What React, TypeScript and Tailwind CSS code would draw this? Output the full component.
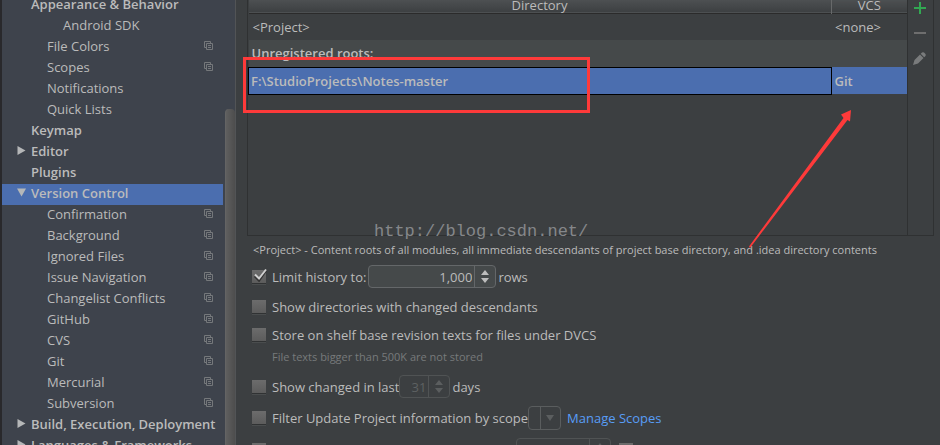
import { useState } from 'react';

type TreeItem = { label: string; level: 0 | 1 | 2; arrow?: 'open' | 'closed'; copy?: boolean };

const tree: TreeItem[] = [
  { label: 'Appearance & Behavior', level: 0 },
  { label: 'Android SDK', level: 2 },
  { label: 'File Colors', level: 1, copy: true },
  { label: 'Scopes', level: 1, copy: true },
  { label: 'Notifications', level: 1 },
  { label: 'Quick Lists', level: 1 },
  { label: 'Keymap', level: 0 },
  { label: 'Editor', level: 0, arrow: 'closed' },
  { label: 'Plugins', level: 0 },
  { label: 'Version Control', level: 0, arrow: 'open' },
  { label: 'Confirmation', level: 1, copy: true },
  { label: 'Background', level: 1, copy: true },
  { label: 'Ignored Files', level: 1, copy: true },
  { label: 'Issue Navigation', level: 1, copy: true },
  { label: 'Changelist Conflicts', level: 1, copy: true },
  { label: 'GitHub', level: 1, copy: true },
  { label: 'CVS', level: 1, copy: true },
  { label: 'Git', level: 1, copy: true },
  { label: 'Mercurial', level: 1, copy: true },
  { label: 'Subversion', level: 1, copy: true },
  { label: 'Build, Execution, Deployment', level: 0, arrow: 'closed' },
  { label: 'Languages & Frameworks', level: 0, arrow: 'closed' },
];

const indent = { 0: 'pl-[15px] font-semibold', 1: 'pl-[45px]', 2: 'pl-[61px]' };

function CopyIcon() {
  return (
    <svg className="ml-auto mr-2.5 shrink-0" width="9" height="9" viewBox="0 0 9 9" fill="none" stroke="#75787b" aria-hidden="true">
      <path d="M2 6.5H.5v-6h6V2" />
      <path d="M2.5 2.5h6v6h-6zM4 4.5h3M4 6.5h3" />
    </svg>
  );
}

function TreeArrow({ open }: { open: boolean }) {
  return (
    <svg width="9" height="9" viewBox="0 0 9 9" fill="#b5b7b8" aria-hidden="true">
      <path d={open ? 'M0 .5h9L4.500 8.500z' : 'M.5 0v9L8.500 4.500z'} />
    </svg>
  );
}

function Sidebar() {
  const [selected, setSelected] = useState('Version Control');
  return (
    <nav aria-label="Settings" className="flex w-[235px] shrink-0 overflow-hidden border-l-2 border-[#29292c] bg-[#3e434c]">
      <ul className="-mt-[5px] min-w-0 flex-1">
        {tree.map((item) => (
          <li key={item.label}>
            <button
              type="button"
              onClick={() => setSelected(item.label)}
              className={`flex h-[21px] w-full items-center whitespace-nowrap pb-1 text-left ${indent[item.level]} ${selected === item.label ? 'bg-[#4b6eaf]' : ''}`}
            >
              {item.level === 0 && (
                <span className="w-3.5 shrink-0">{item.arrow && <TreeArrow open={item.arrow === 'open'} />}</span>
              )}
              {item.label}
              {item.copy && <CopyIcon />}
            </button>
          </li>
        ))}
      </ul>
      <div className="ml-0.5 flex w-2.5 flex-col pt-[109px]">
        <div className="flex-1 rounded-t-sm border-l border-[#646464] bg-linear-to-r from-[#5f5f5f] to-[#4d4d4d]" />
      </div>
    </nav>
  );
}

function CheckBox({ id, checked = false }: { id: string; checked?: boolean }) {
  return (
    <span className="relative flex size-3.5 shrink-0">
      <input
        id={id}
        type="checkbox"
        defaultChecked={checked}
        className="peer size-3.5 appearance-none border-b border-[#303233] bg-linear-to-b from-[#6c6c6c] to-[#5c5c5c] shadow-[0_1px_0_#4a4d4e]"
      />
      <svg className="pointer-events-none absolute -top-1 left-0 hidden peer-checked:block" width="16" height="16" viewBox="0 0 16 16" fill="none" aria-hidden="true">
        <path d="M3 10l4 4 7-10" stroke="#333" strokeWidth="3" />
        <path d="M3 8.500l4 4 7-9" stroke="#d0d0d0" strokeWidth="2" />
      </svg>
    </span>
  );
}

function Spinner({ id, value, width, disabled = false }: { id: string; value: string; width: string; disabled?: boolean }) {
  const line = disabled ? 'border-[#505354]' : 'border-[#646769]';
  return (
    <span className={`flex h-[23px] rounded-sm border ${line} ${width} ${disabled ? 'text-[#5e6162]' : 'bg-[#45494a]'}`}>
      <input
        id={id}
        defaultValue={value}
        disabled={disabled}
        className={`min-w-0 flex-1 border-r bg-transparent pr-0.5 text-right outline-none ${line}`}
      />
      <button type="button" disabled={disabled} aria-label="Change value" className="flex w-5 items-center justify-center">
        <svg width="8" height="13" viewBox="0 0 8 13" fill={disabled ? '#5b5e5f' : '#bdbdbd'} aria-hidden="true">
          <path d="M0 5l4-5 4 5zM0 8h8l-4 5z" />
        </svg>
      </button>
    </span>
  );
}

function RootsTable() {
  return (
    <div className="relative flex h-[236px] border-b border-l border-[#2f3132]">
      <table className="h-[94px] min-w-0 flex-1 table-fixed border-collapse">
        <colgroup>
          <col />
          <col className="w-[76px]" />
        </colgroup>
        <thead>
          <tr className="h-[13px] border-b border-[#2b2b2b] bg-linear-to-b from-[#4d5052] to-[#3d4042] leading-[10px]">
            <th className="p-0 pb-0.5 font-normal">Directory</th>
            <th className="border-l border-[#67696a] p-0 pb-0.5 font-normal">VCS</th>
          </tr>
        </thead>
        <tbody>
          <tr className="h-[27px]">
            <td className="p-0 pl-1">&lt;Project&gt;</td>
            <td className="p-0 pl-1">&lt;none&gt;</td>
          </tr>
          <tr className="h-[27px] bg-[#45494a] font-semibold">
            <td colSpan={2} className="p-0 pl-[3px]">Unregistered roots:</td>
          </tr>
          <tr className="h-[27px] bg-[#4b6eaf] font-semibold">
            <td className="border border-black p-0 pl-0.5">F:\StudioProjects\Notes-master</td>
            <td className="p-0 pl-[3px]">Git</td>
          </tr>
        </tbody>
      </table>
      <div className="flex w-[27px] flex-col items-center border-x border-[#2f3132] pr-0.5">
        <button type="button" aria-label="Add" className="flex h-4 w-full items-center justify-center">
          <svg width="12" height="12" viewBox="0 0 12 12" stroke="#32a852" strokeWidth="2" aria-hidden="true"><path d="M6 0v12M0 6h12" /></svg>
        </button>
        <button type="button" aria-label="Remove" className="flex h-[34px] w-full items-center justify-center">
          <svg width="12" height="2" viewBox="0 0 12 2" fill="#6e6e6e" aria-hidden="true"><path d="M0 0h12v2H0z" /></svg>
        </button>
        <button type="button" aria-label="Edit" className="flex h-4 w-full items-center justify-center">
          <svg width="13" height="13" viewBox="0 0 13 13" fill="#797b7c" aria-hidden="true">
            <path d="M0 13l1.500-5L7 2.500 10.500 6 5 11.500zM7.700 1.800L9 .5Q10 0 11 .5l1.500 1.500Q13 3 12.500 4l-1.300 1.300z" />
          </svg>
        </button>
      </div>
      <svg className="pointer-events-none absolute top-[108px] right-[80px]" width="106" height="142" viewBox="0 0 106 142" fill="#fe3a3a" aria-hidden="true">
        <path d="M1 138.500L95.500 10 93 6.500 103 2l-1 11.500-2.500-1.500L2 140z" />
      </svg>
      <div className="pointer-events-none absolute top-[57px] -left-[5px] h-14 w-[347px] border-3 border-[#fe3a3a]" />
      <span className="pointer-events-none absolute top-[220px] left-[126px] font-['Liberation_Mono',monospace] text-[17px] leading-6 text-[#85878a]">
        http://blog.csdn.net/
      </span>
    </div>
  );
}

export default function App() {
  return (
    <div className="flex h-screen overflow-hidden bg-[#3c3f41] font-['Open_Sans',sans-serif] text-[13px] leading-5 text-[#bbbbbb]">
      <Sidebar />
      <main className="min-w-0 flex-1 border-l border-[#525456] pl-[11px] whitespace-nowrap">
        <div className="mr-1.5">
          <RootsTable />
        </div>
        <p className="mt-1 pl-1.5 text-[11px] leading-5">
          &lt;Project&gt; - Content roots of all modules, all immediate descendants of project base directory, and .idea directory contents
        </p>
        <form className="pl-[5px]">
          <div className="mt-[5px] flex h-[23px] items-center">
            <CheckBox id="limit" checked />
            <label htmlFor="limit" className="ml-1.5 mr-0.5">Limit history to:</label>
            <Spinner id="history-rows" value="1,000" width="w-32" />
            <label htmlFor="history-rows" className="ml-0.5">rows</label>
          </div>
          <div className="mt-[9px] flex items-center">
            <CheckBox id="show-dirs" />
            <label htmlFor="show-dirs" className="ml-1.5">Show directories with changed descendants</label>
          </div>
          <div className="mt-2 flex items-center">
            <CheckBox id="shelf" />
            <label htmlFor="shelf" className="ml-1.5">Store on shelf base revision texts for files under DVCS</label>
          </div>
          <p className="mt-0.5 pl-5 text-[11px] leading-5 text-[#777a7b]">File texts bigger than 500K are not stored</p>
          <div className="mt-2 flex h-[23px] items-center">
            <CheckBox id="changed" />
            <label htmlFor="changed" className="ml-1.5">Show changed in last</label>
            <Spinner id="changed-days" value="31" width="w-[51px]" disabled />
            <label htmlFor="changed-days" className="ml-0.5">days</label>
          </div>
          <div className="mt-2 flex h-6 items-center">
            <CheckBox id="filter" />
            <label htmlFor="filter" className="ml-1.5">Filter Update Project information by scope</label>
            <span className="relative flex h-6 w-[33px] rounded-sm border border-[#5a5d5e]">
              <select aria-label="Scope" disabled className="w-full appearance-none" />
              <svg className="pointer-events-none absolute top-0 right-0" width="20" height="22" viewBox="0 0 20 22" aria-hidden="true">
                <path d="M.5 0v22" stroke="#5a5d5e" />
                <path d="M6 8h8l-4 6z" fill="#5b5e5f" />
              </svg>
            </span>
            <a href="#scopes" className="ml-1.5 text-[#589df6]">Manage Scopes</a>
          </div>
          <div className="mt-2 flex h-[23px] items-center">
            <CheckBox id="notify" />
            <label htmlFor="notify" className="ml-1.5 w-[244px]">&nbsp;</label>
            <Spinner id="notify-value" value="" width="w-[95px]" disabled />
            <span className="ml-2"><CheckBox id="notify-extra" /></span>
          </div>
        </form>
      </main>
    </div>
  );
}
